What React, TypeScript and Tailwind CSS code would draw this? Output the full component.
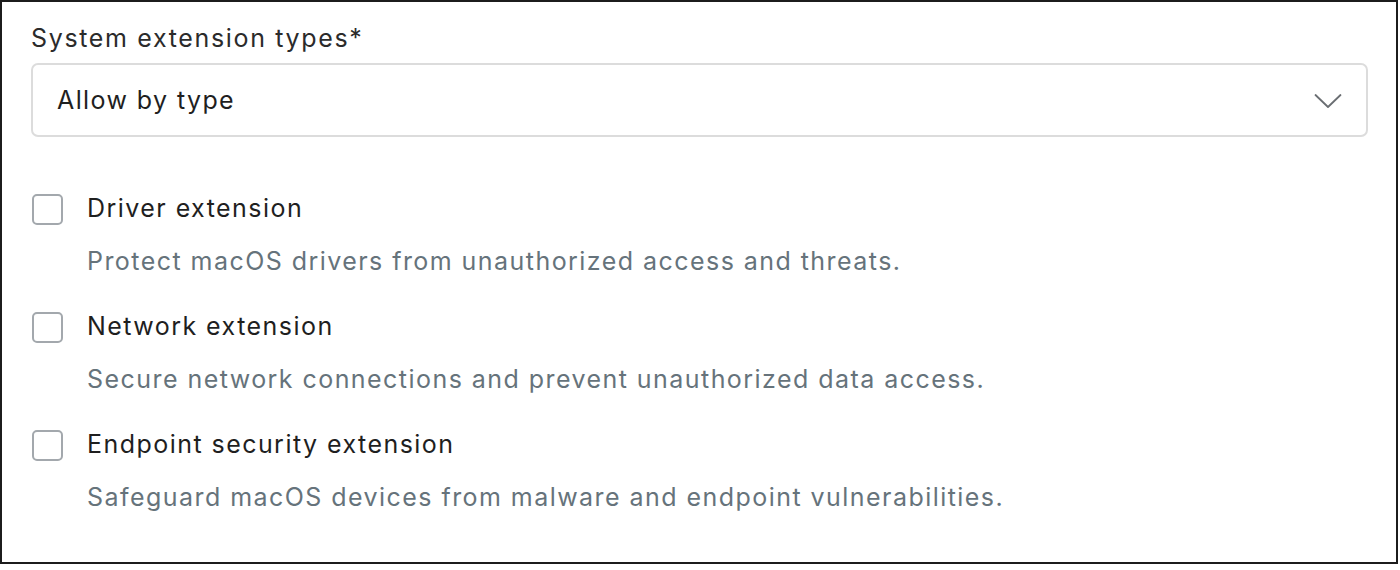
import React from 'react';

const options = [
  { label: 'Driver extension', desc: 'Protect macOS drivers from unauthorized access and threats.' },
  { label: 'Network extension', desc: 'Secure network connections and prevent unauthorized data access.' },
  { label: 'Endpoint security extension', desc: 'Safeguard macOS devices from malware and endpoint vulnerabilities.' },
];

export default function App() {
  return (
    <div className="w-[1400px] h-[570px] bg-white" style={{ fontFamily: 'Inter, "Noto Sans", sans-serif' }}>
      <div className="w-[1398px] h-[564px] border-2 border-[#1c1c1c] pl-[29px] pr-[28px] pt-[18px]">
        <div className="text-[25px] leading-[36px] tracking-[1.65px] text-[#2b2b2b]">System extension types*</div>
        <div className="mt-[7px] h-[74px] border-2 border-[#dcdcdc] rounded-[7px] flex items-center justify-between pl-[24px] pr-[24px] pt-[2px]">
          <span className="text-[25px] tracking-[1.4px] text-[#1f1f1f]">Allow by type</span>
          <svg width="28" height="16" viewBox="0 0 28 16" fill="none">
            <path d="M1.5 2 L14 14 L26.5 2" stroke="#6a6e72" strokeWidth="1.8" strokeLinecap="round" strokeLinejoin="round" />
          </svg>
        </div>
        <div className="mt-[55px] flex flex-col gap-[34px]">
          {options.map((o) => (
            <div key={o.label} className="flex flex-col">
              <div className="flex items-center gap-[24px] h-[34px]">
                <div className="w-[31px] h-[31px] ml-[1px] rounded-[5px] border-2 border-[#a3a8ad] bg-white shrink-0" />
                <span className="text-[25px] tracking-[1.45px] text-[#1f1f1f]">{o.label}</span>
              </div>
              <div className="pl-[56px] mt-[20px] text-[25px] leading-[30px] tracking-[1.45px] text-[#66737b]">{o.desc}</div>
            </div>
          ))}
        </div>
      </div>
    </div>
  );
}
